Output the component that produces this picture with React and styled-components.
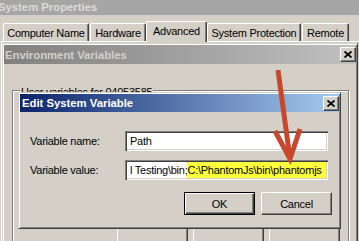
import React from "react";
import styled, { createGlobalStyle } from "styled-components";

const GlobalStyle = createGlobalStyle`
  html, body {
    margin: 0;
    padding: 0;
    background: #d4d0c8;
  }
  body {
    font-family: "Liberation Sans", Arial, sans-serif;
    font-size: 11px;
    letter-spacing: -0.25px;
    color: #000;
  }
`;

const Desktop = styled.div`
  position: relative;
  width: 359px;
  height: 241px;
  overflow: hidden;
  background: #d4d0c8;
`;

const SysTitle = styled.div`
  height: 15px;
  margin-left: -2px;
  background: #a6a6a6;
  color: #dcdad6;
  font-weight: bold;
  font-size: 11.3px;
  letter-spacing: 0;
  line-height: 14px;
  white-space: nowrap;
`;

const TabRow = styled.div`
  display: flex;
  align-items: flex-end;
  height: 26px;
`;

const Tab = styled.div`
  position: relative;
  z-index: ${(p) => (p.$active ? 1 : 0)};
  box-sizing: border-box;
  width: ${(p) => p.$w}px;
  height: ${(p) => (p.$active ? 21 : 18)}px;
  margin-left: ${(p) => p.$ml || 0}px;
  margin-bottom: ${(p) => (p.$active ? -1 : 0)}px;
  display: flex;
  align-items: center;
  justify-content: center;
  padding-bottom: ${(p) => (p.$active ? 2 : 0)}px;
  background: #d4d0c8;
  border-top: 1px solid #fff;
  border-left: 1px solid #fff;
  border-right: 1px solid #404040;
  box-shadow: inset -1px 0 0 #808080;
  border-radius: 2px 2px 0 0;
  white-space: nowrap;
`;

const Panel = styled.div`
  height: 200px;
  margin-left: 1px;
  border-top: 1px solid #fff;
  border-left: 1px solid #fff;
`;

const Win = styled.div`
  position: absolute;
  left: ${(p) => p.$x}px;
  top: ${(p) => p.$y}px;
  width: ${(p) => p.$w}px;
  height: ${(p) => p.$h}px;
  box-sizing: border-box;
  padding: 1px;
  background: #d4d0c8;
  border: 1px solid;
  border-color: #d4d0c8 #404040 #404040 #d4d0c8;
  box-shadow: inset 1px 1px 0 #fff, inset -1px -1px 0 #808080;
  display: flex;
  flex-direction: column;
  z-index: ${(p) => p.$z};
`;

const TitleBar = styled.div`
  height: ${(p) => p.$h}px;
  flex: none;
  display: flex;
  align-items: center;
  justify-content: space-between;
  padding: 0 ${(p) => p.$pr}px 0 ${(p) => p.$pl}px;
  background: ${(p) => p.$bg};
  color: ${(p) => p.$fg};
  font-weight: bold;
  font-size: 11.3px;
  letter-spacing: 0;
  white-space: nowrap;
`;

const CloseBtn = styled.div`
  width: 16px;
  height: 15px;
  box-sizing: border-box;
  display: flex;
  align-items: center;
  justify-content: center;
  background: #d4d0c8;
  border-top: 1px solid #fff;
  border-left: 1px solid #fff;
  border-right: 1px solid #404040;
  border-bottom: 1px solid #404040;
  box-shadow: inset -1px -1px 0 #808080;
`;

const EnvBody = styled.div`
  padding: 26px 7px 0 8px;
`;

const GroupBox = styled.div`
  position: relative;
  height: 180px;
  box-sizing: border-box;
  padding: 137px 8px 0 0;
  border: 1px solid #808080;
  box-shadow: inset 1px 1px 0 #fff, 1px 1px 0 #fff;
`;

const GroupLabel = styled.span`
  position: absolute;
  top: -5px;
  left: 7px;
  padding: 0 1px;
  line-height: 13px;
  background: #d4d0c8;
`;

const ButtonRow = styled.div`
  display: flex;
  justify-content: flex-end;
  gap: ${(p) => p.$gap}px;
  margin: ${(p) => p.$m};
`;

const Button = styled.div`
  width: 71px;
  height: 23px;
  box-sizing: border-box;
  display: flex;
  align-items: center;
  justify-content: center;
  background: #d4d0c8;
  border: 1px solid;
  border-color: ${(p) => (p.$default ? "#000" : "#fff #404040 #404040 #fff")};
  box-shadow: ${(p) =>
    p.$default
      ? "inset 1px 1px 0 #fff, inset -1px -1px 0 #404040, inset -2px -2px 0 #808080"
      : "inset -1px -1px 0 #808080"};
`;

const DialogBody = styled.div`
  padding: 19px 9px 10px 10px;
`;

const FieldRow = styled.div`
  display: flex;
  align-items: center;
  height: 20px;
  margin-bottom: 9px;
`;

const Label = styled.div`
  width: 95px;
`;

const Field = styled.div`
  width: 203px;
  height: 20px;
  box-sizing: border-box;
  display: flex;
  align-items: stretch;
  padding: 2px;
  background: #fff;
  box-shadow: inset 1px 1px 0 #808080, inset 2px 2px 0 #404040,
    inset -1px -1px 0 #fff, inset -2px -2px 0 #d4d0c8;
  white-space: nowrap;
  overflow: hidden;
`;

const FieldText = styled.span`
  display: flex;
  align-items: center;
  padding-left: ${(p) => p.$pl || 0}px;
  flex: ${(p) => (p.$grow ? 1 : "none")};
  background: ${(p) => p.$bg || "transparent"};
`;

const Overlay = styled.svg`
  position: absolute;
  left: 0;
  top: 0;
  z-index: 10;
  pointer-events: none;
`;

function CloseIcon() {
  return (
    <svg width="8" height="7" viewBox="0 0 8 7">
      <path d="M0.5 0.5 L7.5 6.5 M7.5 0.5 L0.5 6.5" stroke="#000" strokeWidth="1.8" fill="none" />
    </svg>
  );
}

const tabs = [
  { label: "Computer Name", w: 86, ml: 3 },
  { label: "Hardware", w: 56, ml: 1 },
  { label: "Advanced", w: 61, ml: 0, active: true },
  { label: "System Protection", w: 94, ml: 0 },
  { label: "Remote", w: 47, ml: 1 },
];

export default function App() {
  return (
    <Desktop>
      <GlobalStyle />
      <SysTitle>System Properties</SysTitle>
      <TabRow>
        {tabs.map((t) => (
          <Tab key={t.label} $w={t.w} $ml={t.ml} $active={t.active}>
            {t.label}
          </Tab>
        ))}
      </TabRow>
      <Panel />

      <Win $x={2} $y={43} $w={356} $h={230} $z={2}>
        <TitleBar $h={19} $pl={1} $pr={0} $bg="linear-gradient(90deg, #808080, #c0c0c0)" $fg="#d4d0c8">
          <span>Environment Variables</span>
          <CloseBtn>
            <CloseIcon />
          </CloseBtn>
        </TitleBar>
        <EnvBody>
          <GroupBox>
            <GroupLabel>User variables for 04053585</GroupLabel>
            {/* buttons of the group: only their top edges show below the dialog */}
            <ButtonRow $gap={5} $m="0">
              <Button />
              <Button />
              <Button />
            </ButtonRow>
          </GroupBox>
        </EnvBody>
      </Win>

      <Win $x={18} $y={92} $w={323} $h={137} $z={3}>
        <TitleBar $h={18} $pl={2} $pr={0} $bg="linear-gradient(90deg, #0a246a, #a6caf0)" $fg="#fff">
          <span>Edit System Variable</span>
          <CloseBtn>
            <CloseIcon />
          </CloseBtn>
        </TitleBar>
        <DialogBody>
          <FieldRow>
            <Label>Variable name:</Label>
            <Field>
              <FieldText $pl={3}>Path</FieldText>
            </Field>
          </FieldRow>
          <FieldRow>
            <Label>Variable value:</Label>
            <Field>
              <FieldText $pl={3}>l Testing\bin;</FieldText>
              <FieldText $grow $bg="#ffff3c">C:\PhantomJs\bin\phantomjs</FieldText>
            </Field>
          </FieldRow>
          <ButtonRow $gap={6} $m="12px -2px 0 0">
            <Button $default>OK</Button>
            <Button>Cancel</Button>
          </ButtonRow>
        </DialogBody>
      </Win>

      <Overlay width="359" height="241" viewBox="0 0 359 241">
        <g stroke="#c8472d" strokeWidth="5" fill="none" strokeLinejoin="miter">
          <path d="M278 70 L289.5 155" />
          <path d="M275 131 L290 159 L300 129" />
        </g>
      </Overlay>
    </Desktop>
  );
}
